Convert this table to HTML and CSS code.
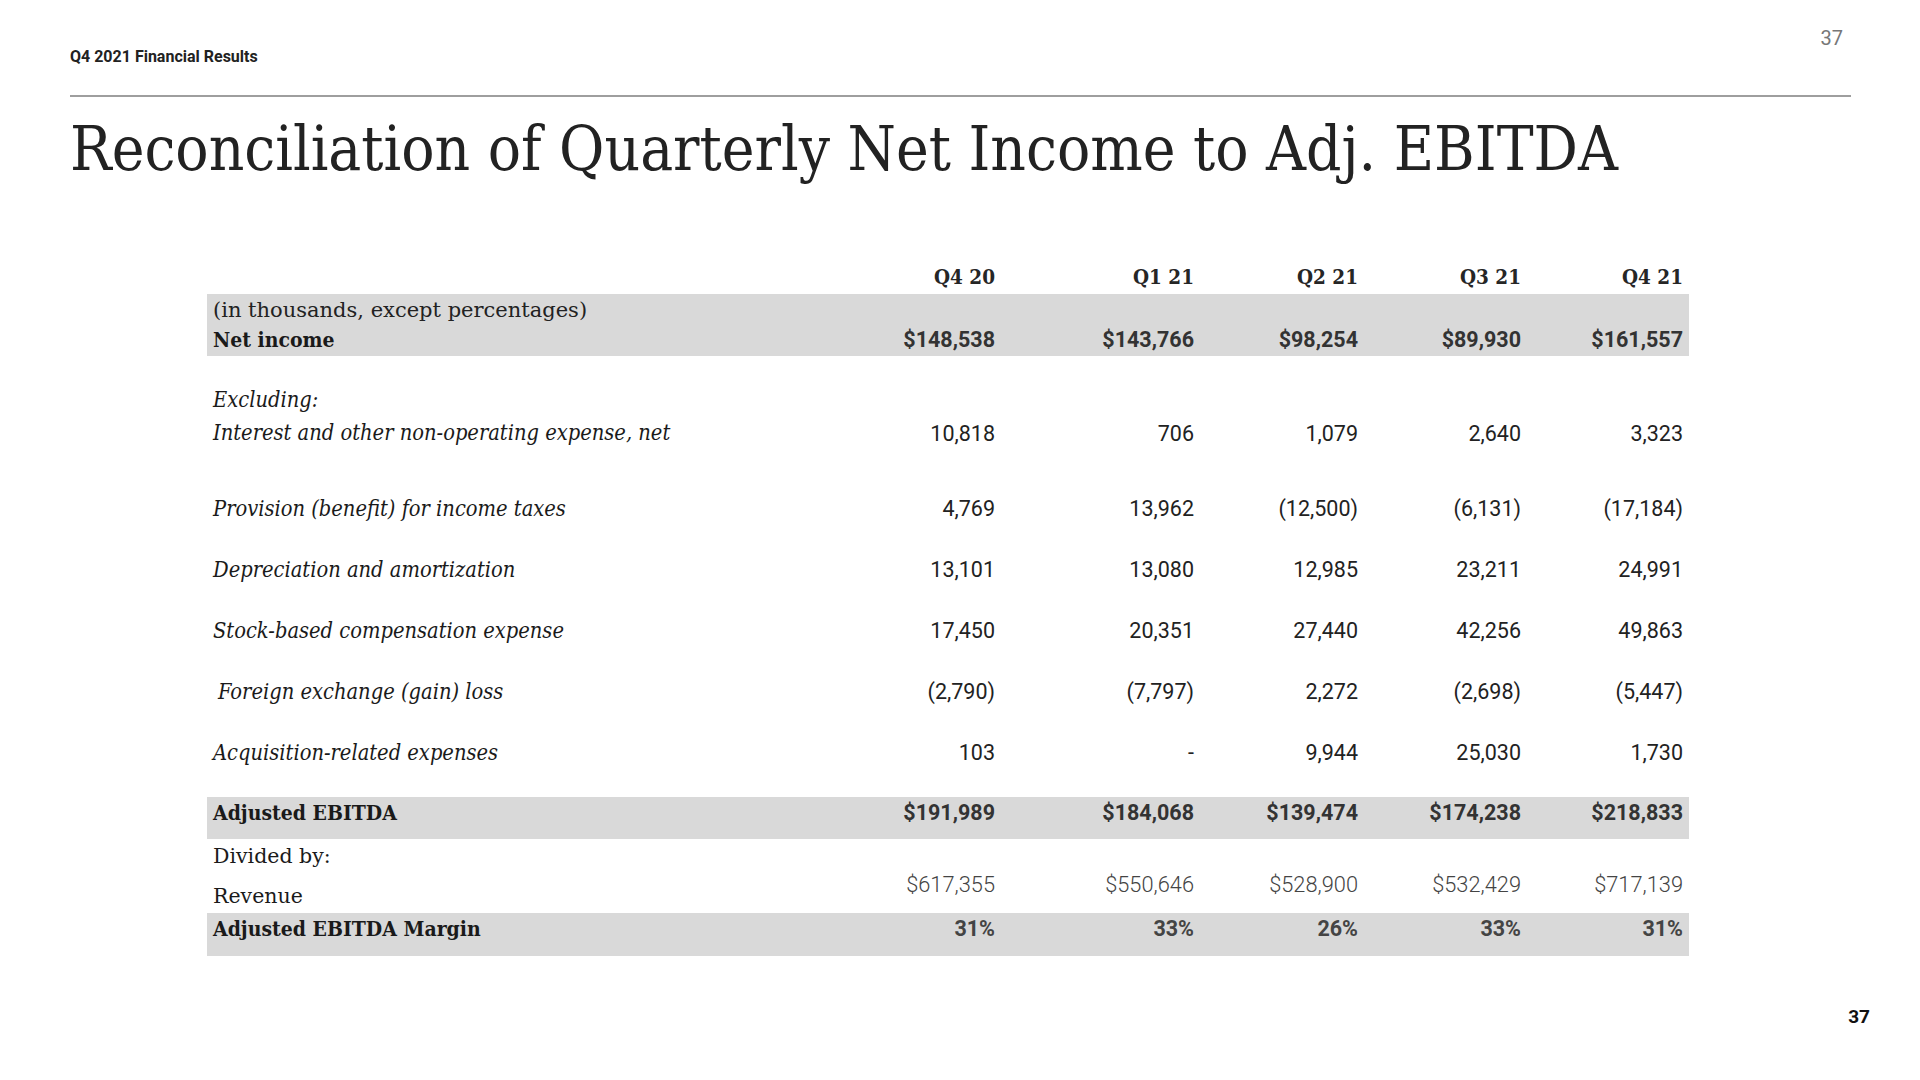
FILE: index.html
```html
<!DOCTYPE html>
<html lang="en">
<head>
<meta charset="utf-8">
<title>Q4 2021 Financial Results</title>
<link rel="stylesheet" href="styles.css">
</head>
<body>
<div class="slide">
  <header class="top">
    <div class="kicker">Q4 2021 Financial Results</div>
    <div class="pnum">37</div>
  </header>
  <div class="rule"></div>
  <h1 class="title">Reconciliation of Quarterly Net Income to Adj. EBITDA</h1>

  <div class="table">
    <div class="row hdr">
      <div class="lbl"></div>
      <div class="num qh">Q4 20</div>
      <div class="num qh">Q1 21</div>
      <div class="num qh">Q2 21</div>
      <div class="num qh">Q3 21</div>
      <div class="num qh">Q4 21</div>
    </div>

    <div class="row band band1">
      <div class="lbl"><div class="units">(in thousands, except percentages)</div><div class="strong">Net income</div></div>
      <div class="num b">$148,538</div>
      <div class="num b">$143,766</div>
      <div class="num b">$98,254</div>
      <div class="num b">$89,930</div>
      <div class="num b">$161,557</div>
    </div>

    <div class="row excl">
      <div class="lbl it"><div>Excluding:</div><div>Interest and other non-operating expense, net</div></div>
      <div class="num">10,818</div>
      <div class="num">706</div>
      <div class="num">1,079</div>
      <div class="num">2,640</div>
      <div class="num">3,323</div>
    </div>

    <div class="row single">
      <div class="lbl it">Provision (benefit) for income taxes</div>
      <div class="num">4,769</div>
      <div class="num">13,962</div>
      <div class="num">(12,500)</div>
      <div class="num">(6,131)</div>
      <div class="num">(17,184)</div>
    </div>

    <div class="row single">
      <div class="lbl it">Depreciation and amortization</div>
      <div class="num">13,101</div>
      <div class="num">13,080</div>
      <div class="num">12,985</div>
      <div class="num">23,211</div>
      <div class="num">24,991</div>
    </div>

    <div class="row single">
      <div class="lbl it">Stock-based compensation expense</div>
      <div class="num">17,450</div>
      <div class="num">20,351</div>
      <div class="num">27,440</div>
      <div class="num">42,256</div>
      <div class="num">49,863</div>
    </div>

    <div class="row single">
      <div class="lbl it indent">Foreign exchange (gain) loss</div>
      <div class="num">(2,790)</div>
      <div class="num">(7,797)</div>
      <div class="num">2,272</div>
      <div class="num">(2,698)</div>
      <div class="num">(5,447)</div>
    </div>

    <div class="row single">
      <div class="lbl it">Acquisition-related expenses</div>
      <div class="num">103</div>
      <div class="num">-</div>
      <div class="num">9,944</div>
      <div class="num">25,030</div>
      <div class="num">1,730</div>
    </div>

    <div class="row band band2">
      <div class="lbl strong">Adjusted EBITDA</div>
      <div class="num b">$191,989</div>
      <div class="num b">$184,068</div>
      <div class="num b">$139,474</div>
      <div class="num b">$174,238</div>
      <div class="num b">$218,833</div>
    </div>

    <div class="row divrev">
      <div class="lbl"><div class="divby plain">Divided by:</div><div class="rev plain">Revenue</div></div>
      <div class="num lt">$617,355</div>
      <div class="num lt">$550,646</div>
      <div class="num lt">$528,900</div>
      <div class="num lt">$532,429</div>
      <div class="num lt">$717,139</div>
    </div>

    <div class="row band band3">
      <div class="lbl strong">Adjusted EBITDA Margin</div>
      <div class="num b pct">31%</div>
      <div class="num b pct">33%</div>
      <div class="num b pct">26%</div>
      <div class="num b pct">33%</div>
      <div class="num b pct">31%</div>
    </div>
  </div>

  <footer class="foot"><span class="foot-num">37</span></footer>
</div>
</body>
</html>
```

FILE: styles.css
```css
* { box-sizing: border-box; }
html, body { margin: 0; padding: 0; background: #ffffff; }
body { width: 1920px; height: 1080px; overflow: hidden; }

.slide {
  width: 1920px;
  height: 1080px;
  padding: 0 69px 0 70px;
  display: flex;
  flex-direction: column;
  color: #1f1f1f;
}

.top {
  height: 95px;
  display: flex;
  justify-content: space-between;
  align-items: flex-start;
}
.kicker {
  font-family: Roboto, "Liberation Sans", sans-serif;
  font-weight: 700;
  font-size: 16px;
  line-height: 18px;
  padding-top: 48px;
  color: #222;
}
.pnum {
  font-family: Roboto, "Liberation Sans", sans-serif;
  font-size: 20px;
  line-height: 24px;
  padding-top: 26px;
  padding-right: 8px;
  color: #777;
}
.rule {
  height: 2px;
  background: #9e9e9e;
}

.title {
  margin: 17px 0 0 0;
  font-family: "DejaVu Serif", serif;
  font-stretch: condensed;
  font-weight: 400;
  font-size: 61.5px;
  line-height: 70px;
  color: #222;
  white-space: nowrap;
}

.table {
  margin: 66px 0 0 137px;
  width: 1482px;
  display: flex;
  flex-direction: column;
}
.row {
  display: grid;
  grid-template-columns: 661px 133px 199px 164px 163px 162px;
}
.lbl {
  padding-left: 6px;
  font-family: "DejaVu Serif", serif;
  font-stretch: condensed;
  font-size: 21px;
  color: #1a1a1a;
  white-space: nowrap;
}
.units {
  font-stretch: normal;
  font-size: 21px;
  color: #222;
}
.plain {
  font-stretch: normal;
  font-size: 20.5px;
}
.num {
  padding-right: 6px;
  text-align: right;
  font-family: Roboto, "Liberation Sans", sans-serif;
  font-size: 21.5px;
  color: #222;
  white-space: nowrap;
}
.it { font-style: italic; font-size: 21.7px; }
.indent { padding-left: 11px; }
.strong { font-weight: 700; }
.b { font-weight: 700; color: #333; }
.lt { font-weight: 300; font-size: 21.8px; color: #444; }
.pct { color: #444; }

.band { background: #d9d9d9; }

.hdr { height: 44px; align-items: end; }
.qh {
  font-family: "DejaVu Serif", serif;
  font-stretch: condensed;
  font-weight: 700;
  font-size: 20.5px;
  line-height: 24px;
  padding-bottom: 5px;
  color: #262626;
}

.band1 { height: 62px; }
.band1 .lbl { line-height: 29px; padding-top: 2px; }
.band1 .num { align-self: end; line-height: 29px; padding-bottom: 2px; }

.excl { height: 122px; }
.excl .lbl { line-height: 33px; padding-top: 27px; }
.excl .num { align-self: end; line-height: 33px; padding-bottom: 28px; }

.single { height: 61px; align-items: center; }
.single .lbl, .single .num { line-height: 26px; }

.band2 { height: 42px; margin-top: 14px; }
.band2 .lbl, .band2 .num { line-height: 26px; padding-top: 3px; }

.divrev { height: 74px; }
.divrev .lbl { line-height: 26px; padding-top: 4px; }
.divrev .rev { margin-top: 14px; }
.divrev .num { line-height: 26px; padding-top: 33px; }

.band3 { height: 43px; }
.band3 .lbl, .band3 .num { line-height: 26px; padding-top: 3px; }

.foot {
  margin-top: auto;
  height: 78px;
  display: flex;
  justify-content: flex-end;
  align-items: flex-start;
}
.foot-num {
  font-family: Roboto, "Liberation Sans", sans-serif;
  font-weight: 700;
  font-size: 19px;
  line-height: 22px;
  margin-top: 4px;
  margin-right: -19px;
  color: #111;
}
```
